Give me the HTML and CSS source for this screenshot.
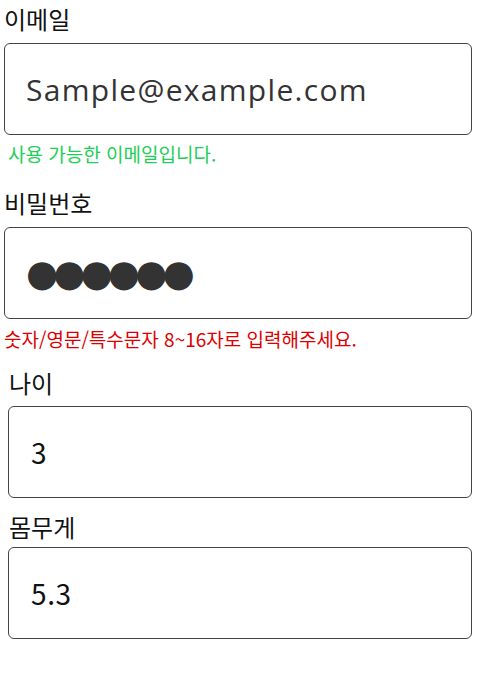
FILE: index.html
```html
<!DOCTYPE html>
<html lang="ko">
<head>
<meta charset="utf-8">
<link rel="stylesheet" href="styles.css">
</head>
<body>
<form class="form">
  <div class="group first">
    <label class="label">이메일</label>
    <div class="box"><span class="value email">Sample@example.com</span></div>
    <p class="help ok">사용 가능한 이메일입니다.</p>
  </div>
  <div class="group">
    <label class="label">비밀번호</label>
    <div class="box"><span class="value dots">●●●●●●</span></div>
    <p class="help err">숫자/영문/특수문자 8~16자로 입력해주세요.</p>
  </div>
  <div class="sub">
    <div class="group">
      <label class="label">나이</label>
      <div class="box"><span class="value num">3</span></div>
    </div>
    <div class="group last">
      <label class="label">몸무게</label>
      <div class="box"><span class="value num">5.3</span></div>
    </div>
  </div>
</form>
</body>
</html>
```
FILE: styles.css
```css
html, body {
  margin: 0;
  padding: 0;
  background: #fff;
}
body {
  font-family: "Noto Sans CJK KR", "Noto Sans", sans-serif;
  color: #111;
}
.form {
  width: 468px;
  padding: 0 0 0 4px;
  display: flex;
  flex-direction: column;
}
.group {
  display: flex;
  flex-direction: column;
}
.label {
  font-size: 24px;
  line-height: 36px;
  height: 36px;
  margin-bottom: 6px;
}
.first .label {
  margin-top: 1px;
}
.box {
  box-sizing: border-box;
  height: 92px;
  border: 1.5px solid #444;
  border-radius: 6px;
  display: flex;
  align-items: center;
  padding-left: 21px;
}
.value {
  color: #333;
}
.email {
  font-family: "Open Sans", sans-serif;
  font-size: 30px;
  letter-spacing: 1.3px;
}
.dots {
  font-family: "DejaVu Sans", sans-serif;
  font-size: 37px;
  letter-spacing: -5px;
  color: #333;
}
.num {
  font-size: 28px;
  letter-spacing: 0.6px;
  color: #111;
}
.help {
  margin: 6px 0 18px;
  font-size: 19px;
  line-height: 26px;
  height: 26px;
}
.ok {
  color: #1ccf55;
  padding-left: 4px;
}
.err {
  color: #dd0000;
  margin: 7px 0 13px;
}
.sub {
  padding-left: 4px;
  display: flex;
  flex-direction: column;
}
.sub .label {
  padding-left: 1px;
  margin-bottom: 5px;
}
.sub .last .label {
  margin-top: 11px;
  margin-bottom: 2px;
}
.sub .box {
  padding-left: 22px;
}
```
